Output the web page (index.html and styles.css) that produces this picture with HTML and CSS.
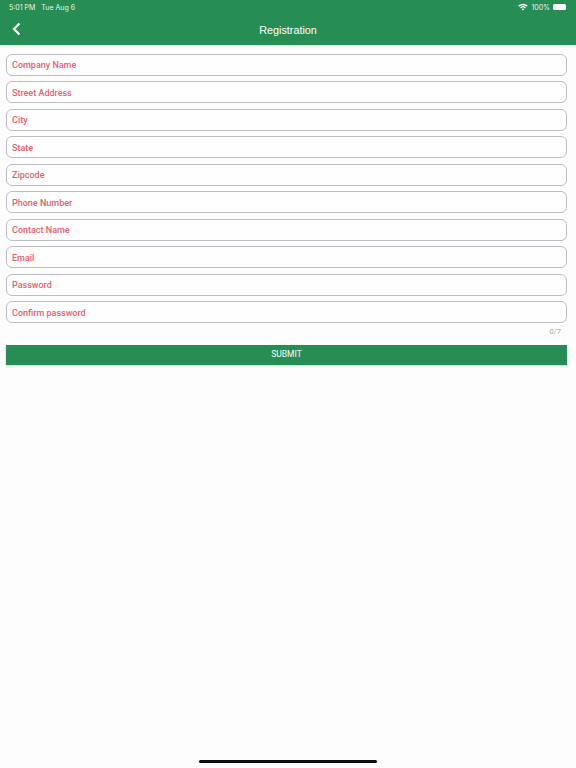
FILE: index.html
```html
<!DOCTYPE html>
<html lang="en">
<head>
  <meta charset="UTF-8" />
  <meta name="viewport" content="width=device-width, initial-scale=1.0"/>
  <title>Registration</title>
  <link rel="stylesheet" href="styles.css">
</head>
<body>
  <header class="header">
    <div class="status">
      <div class="status-time"><span>5:01 PM</span><span>Tue Aug 6</span></div>
      <div class="status-right">
        <svg class="wifi" width="10" height="8" viewBox="0 0 10 8">
          <path d="M0.2 2.6A6.9 6.9 0 0 1 9.8 2.6L8.8 3.7A5.4 5.4 0 0 0 1.2 3.7Z" fill="#fff"/>
          <path d="M2 4.4A4.3 4.3 0 0 1 8 4.4L7 5.5A2.9 2.9 0 0 0 3 5.5Z" fill="#fff"/>
          <path d="M3.8 6.2A1.7 1.7 0 0 1 6.2 6.2L5 7.6Z" fill="#fff"/>
        </svg>
        <span>100%</span>
        <div class="battery"><div class="battery-fill"></div></div>
      </div>
    </div>
    <div class="nav">
      <svg class="back" width="9" height="14" viewBox="0 0 9 14">
        <path d="M7.4 1.4L2 7l5.4 5.6" fill="none" stroke="#fff" stroke-width="2.2"/>
      </svg>
      <h1 class="title">Registration</h1>
    </div>
  </header>

  <main class="form">
    <div class="field">Company Name</div>
    <div class="field">Street Address</div>
    <div class="field">City</div>
    <div class="field">State</div>
    <div class="field">Zipcode</div>
    <div class="field">Phone Number</div>
    <div class="field">Contact Name</div>
    <div class="field">Email</div>
    <div class="field">Password</div>
    <div class="field">Confirm password</div>
    <div class="counter">0/7</div>
    <button class="submit">SUBMIT</button>
  </main>

  <div class="home-bar"></div>
</body>
</html>
```

FILE: styles.css
```css
body {
  margin: 0;
  height: 768px;
  overflow: hidden;
  position: relative;
  background: #fdfdfe;
  font-family: "Roboto", "Liberation Sans", sans-serif;
}

.header {
  height: 45px;
  background: #268d55;
  color: #fff;
  box-shadow: 0 1px 3px rgba(0,0,0,0.15);
}

.status {
  height: 14px;
  padding: 0 10px 0 9px;
  display: flex;
  justify-content: space-between;
  align-items: center;
  font-family: "Inter", "Liberation Sans", sans-serif;
  font-size: 7px;
  color: #e8f5ed;
}

.status-time {
  display: flex;
  gap: 6px;
}

.status-right {
  display: flex;
  align-items: center;
  gap: 3px;
}

.battery {
  width: 13px;
  height: 6px;
  padding: 1px;
  box-sizing: border-box;
  border-radius: 1.5px;
  background: #fff;
}

.battery-fill {
  height: 100%;
  background: #fff;
}

.nav {
  height: 31px;
  display: flex;
  align-items: center;
  justify-content: center;
  position: relative;
}

.back {
  position: absolute;
  left: 12px;
  top: 8px;
}

.title {
  margin: 0;
  font-size: 10.8px;
  font-weight: 400;
  font-family: "Liberation Sans", sans-serif;
}

.form {
  padding: 8.5px 9px 0 6px;
  display: flex;
  flex-direction: column;
  gap: 5.5px;
}

.field {
  height: 22px;
  box-sizing: border-box;
  padding: 1px 5px 0;
  display: flex;
  align-items: center;
  border: 1px solid #bdbcc4;
  border-radius: 6px;
  background: #fefeff;
  color: #e2606f;
  font-size: 9px;
  font-weight: 500;
}

.counter {
  margin-top: -2.5px;
  height: 11px;
  padding-right: 6px;
  text-align: right;
  font-size: 7.5px;
  line-height: 11px;
  color: #a5a5a8;
}

.submit {
  margin-top: 2px;
  height: 20px;
  padding: 0 0 1px;
  border: none;
  background: #268d55;
  color: #fff;
  font-family: inherit;
  font-size: 8.5px;
  box-shadow: 0 1px 2px rgba(38,141,85,0.3);
}

.home-bar {
  position: absolute;
  left: 199px;
  top: 760px;
  width: 178px;
  height: 3px;
  border-radius: 2px;
  background: #0c0c0e;
}
```
